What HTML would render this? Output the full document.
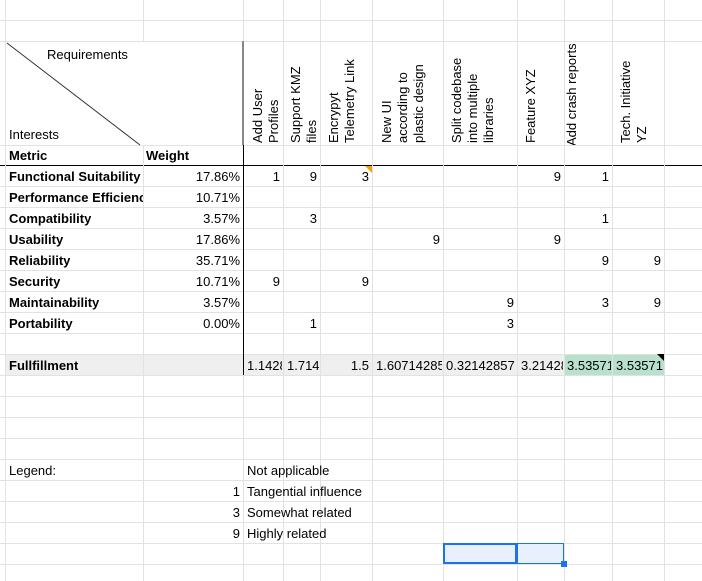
<!DOCTYPE html>
<html><head><meta charset="utf-8"><style>
body{margin:0;width:702px;height:581px;overflow:hidden;background:#fff;font-family:"Liberation Sans",Arial,sans-serif;font-size:13px;color:#000;position:relative}
.a{position:absolute}
.v{position:absolute;width:1px;background:#e2e2e2}
.h{position:absolute;height:1px;background:#e2e2e2}
.c{position:absolute;height:21px;line-height:21px;white-space:nowrap;overflow:hidden}
.r{text-align:right}
.b{font-weight:bold}
.rot{position:absolute;top:42px;height:101px;writing-mode:vertical-rl;transform:rotate(180deg);line-height:16px;white-space:nowrap;overflow:hidden}
</style></head><body>
<div class="a" style="left:6px;top:354px;width:658px;height:21px;background:#efefef"></div>
<div class="a" style="left:564px;top:354px;width:100px;height:21px;background:#b7e1cd"></div>
<div class="a" style="left:443px;top:543px;width:121px;height:21px;background:#e8f0fe"></div>

<div class="h" style="left:0;top:20px;width:702px"></div>
<div class="h" style="left:0;top:41px;width:702px"></div>
<div class="h" style="left:0;top:145px;width:702px"></div>
<div class="a" style="left:0;top:165px;width:702px;height:1px;background:#000"></div>
<div class="h" style="left:0;top:186px;width:702px"></div>
<div class="h" style="left:0;top:207px;width:702px"></div>
<div class="h" style="left:0;top:228px;width:702px"></div>
<div class="h" style="left:0;top:249px;width:702px"></div>
<div class="h" style="left:0;top:270px;width:702px"></div>
<div class="h" style="left:0;top:291px;width:702px"></div>
<div class="h" style="left:0;top:312px;width:702px"></div>
<div class="h" style="left:0;top:333px;width:702px"></div>
<div class="h" style="left:0;top:354px;width:702px"></div>
<div class="h" style="left:0;top:375px;width:702px"></div>
<div class="h" style="left:0;top:396px;width:702px"></div>
<div class="h" style="left:0;top:417px;width:702px"></div>
<div class="h" style="left:0;top:438px;width:702px"></div>
<div class="h" style="left:0;top:459px;width:702px"></div>
<div class="h" style="left:0;top:480px;width:702px"></div>
<div class="h" style="left:0;top:501px;width:702px"></div>
<div class="h" style="left:0;top:522px;width:702px"></div>
<div class="h" style="left:0;top:543px;width:702px"></div>
<div class="h" style="left:0;top:564px;width:702px"></div>

<div class="v" style="left:5px;top:0;height:581px"></div>
<div class="v" style="left:143px;top:0;height:41px"></div>
<div class="v" style="left:143px;top:145px;height:436px"></div>
<div class="v" style="left:243px;top:0;height:581px"></div>
<div class="a" style="left:242px;top:41px;width:2px;height:104px;background:#888"></div>
<div class="a" style="left:243px;top:145px;width:1px;height:230px;background:#000"></div>
<div class="v" style="left:283px;top:0;height:581px"></div>
<div class="v" style="left:320px;top:0;height:581px"></div>
<div class="v" style="left:372px;top:0;height:581px"></div>
<div class="v" style="left:443px;top:0;height:581px"></div>
<div class="v" style="left:517px;top:0;height:581px"></div>
<div class="v" style="left:564px;top:0;height:581px"></div>
<div class="v" style="left:612px;top:0;height:581px"></div>
<div class="v" style="left:664px;top:0;height:581px"></div>

<svg class="a" style="left:0;top:0" width="702" height="581"><line x1="7" y1="43" x2="140" y2="145" stroke="#333" stroke-width="1"/>
<polygon points="365,166 372,166 372,173" fill="#f4a300"/>
<polygon points="657,354 664,354 664,361" fill="#000"/>
<rect x="444" y="544" width="72" height="19" fill="none" stroke="#1a73e8" stroke-width="2"/>
<rect x="517.5" y="543.5" width="46" height="20" fill="none" stroke="#1a73e8" stroke-width="1"/>
<rect x="561" y="561" width="6" height="6" fill="#1a73e8"/>
</svg>

<div class="c" style="left:47px;top:44px">Requirements</div>
<div class="c" style="left:9px;top:124px">Interests</div>

<div class="rot" style="left:250px">Add User<br>Profiles</div>
<div class="rot" style="left:288px">Support KMZ<br>files</div>
<div class="rot" style="left:326px;height:101px">Encrypyt<br>Telemetry Link</div>
<div class="rot" style="left:379px">New UI<br>according to<br>plastic design</div>
<div class="rot" style="left:449px">Split codebase<br>into multiple<br>libraries</div>
<div class="rot" style="left:523px">Feature XYZ</div>
<div class="a" style="left:564px;top:41px;width:48px;height:104px;overflow:hidden"><div class="rot" style="left:0px;top:2px;height:112px;text-align:right;overflow:visible">Add crash reports</div></div>
<div class="rot" style="left:618px">Tech. Initiative<br>YZ</div>

<div class="c b" style="left:9px;top:145px">Metric</div>
<div class="c b" style="left:146px;top:145px">Weight</div>

<div class="c b" style="left:9px;top:166px;width:134px">Functional Suitability</div>
<div class="c b" style="left:9px;top:187px;width:134px">Performance Efficiency</div>
<div class="c b" style="left:9px;top:208px">Compatibility</div>
<div class="c b" style="left:9px;top:229px">Usability</div>
<div class="c b" style="left:9px;top:250px">Reliability</div>
<div class="c b" style="left:9px;top:271px">Security</div>
<div class="c b" style="left:9px;top:292px">Maintainability</div>
<div class="c b" style="left:9px;top:313px">Portability</div>
<div class="c b" style="left:9px;top:355px">Fullfillment</div>

<div class="c r" style="left:143px;width:97px;top:166px">17.86%</div>
<div class="c r" style="left:143px;width:97px;top:187px">10.71%</div>
<div class="c r" style="left:143px;width:97px;top:208px">3.57%</div>
<div class="c r" style="left:143px;width:97px;top:229px">17.86%</div>
<div class="c r" style="left:143px;width:97px;top:250px">35.71%</div>
<div class="c r" style="left:143px;width:97px;top:271px">10.71%</div>
<div class="c r" style="left:143px;width:97px;top:292px">3.57%</div>
<div class="c r" style="left:143px;width:97px;top:313px">0.00%</div>

<div class="c r" style="left:244px;width:36px;top:166px">1</div>
<div class="c r" style="left:284px;width:33px;top:166px">9</div>
<div class="c r" style="left:321px;width:48px;top:166px">3</div>
<div class="c r" style="left:518px;width:43px;top:166px">9</div>
<div class="c r" style="left:565px;width:44px;top:166px">1</div>
<div class="c r" style="left:284px;width:33px;top:208px">3</div>
<div class="c r" style="left:565px;width:44px;top:208px">1</div>
<div class="c r" style="left:373px;width:67px;top:229px">9</div>
<div class="c r" style="left:518px;width:43px;top:229px">9</div>
<div class="c r" style="left:565px;width:44px;top:250px">9</div>
<div class="c r" style="left:613px;width:48px;top:250px">9</div>
<div class="c r" style="left:244px;width:36px;top:271px">9</div>
<div class="c r" style="left:321px;width:48px;top:271px">9</div>
<div class="c r" style="left:444px;width:70px;top:292px">9</div>
<div class="c r" style="left:565px;width:44px;top:292px">3</div>
<div class="c r" style="left:613px;width:48px;top:292px">9</div>
<div class="c r" style="left:284px;width:33px;top:313px">1</div>
<div class="c r" style="left:444px;width:70px;top:313px">3</div>

<div class="c" style="left:247px;width:35px;top:355px">1.1428</div>
<div class="c" style="left:287px;width:32px;top:355px">1.714</div>
<div class="c r" style="left:321px;width:48px;top:355px">1.5</div>
<div class="c" style="left:376px;width:66px;top:355px">1.6071428571</div>
<div class="c" style="left:446px;width:70px;top:355px">0.32142857</div>
<div class="c" style="left:521px;width:42px;top:355px">3.21428</div>
<div class="c" style="left:567px;width:44px;top:355px">3.535714</div>
<div class="c" style="left:616px;width:47px;top:355px">3.535714</div>

<div class="c" style="left:9px;top:460px">Legend:</div>
<div class="c" style="left:247px;top:460px">Not applicable</div>
<div class="c r" style="left:143px;width:97px;top:481px">1</div>
<div class="c" style="left:247px;top:481px">Tangential influence</div>
<div class="c r" style="left:143px;width:97px;top:502px">3</div>
<div class="c" style="left:247px;top:502px">Somewhat related</div>
<div class="c r" style="left:143px;width:97px;top:523px">9</div>
<div class="c" style="left:247px;top:523px">Highly related</div>
</body></html>
